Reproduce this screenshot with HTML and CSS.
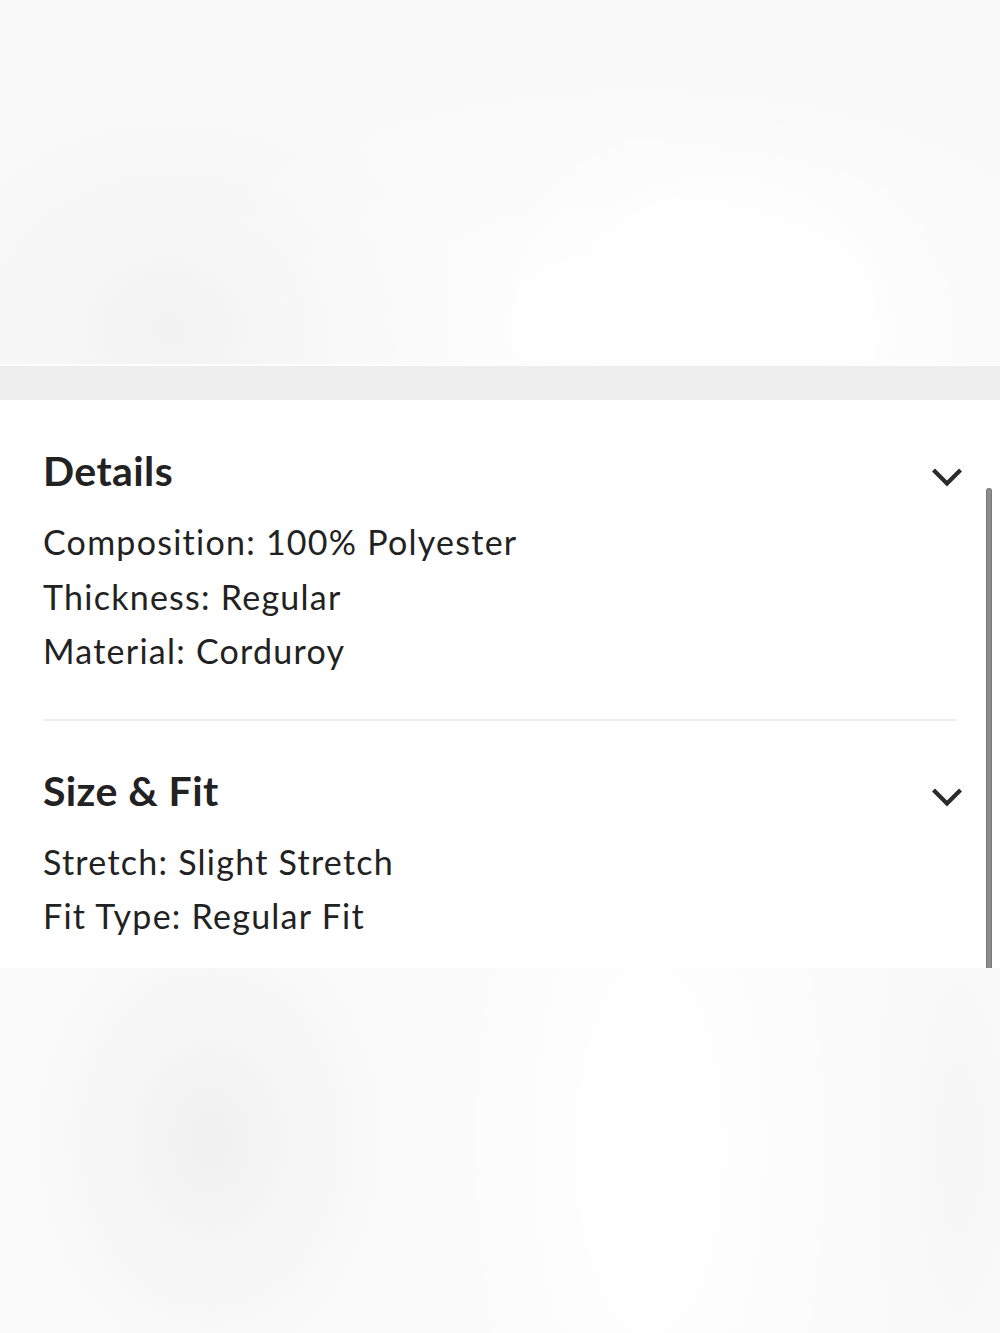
FILE: index.html
```html
<!DOCTYPE html>
<html lang="en">
<head>
<meta charset="utf-8">
<title>Product details</title>
<link rel="stylesheet" href="styles.css">
</head>
<body>
<div class="page">
  <div class="hero"></div>
  <div class="band"></div>
  <section class="panel">
    <div class="content">
      <div class="section">
        <div class="section-head">
          <h2 class="title">Details</h2>
          <svg class="chevron" width="34" height="24" viewBox="0 0 34 24" aria-hidden="true"><path d="M3.5 5 L17 18.5 L30.5 5" fill="none" stroke="#2b2b2b" stroke-width="4.2"/></svg>
        </div>
        <div class="rows">
          <p class="row">Composition: 100% Polyester</p>
          <p class="row">Thickness: Regular</p>
          <p class="row">Material: Corduroy</p>
        </div>
      </div>
      <div class="divider"></div>
      <div class="section">
        <div class="section-head">
          <h2 class="title">Size &amp; Fit</h2>
          <svg class="chevron" width="34" height="24" viewBox="0 0 34 24" aria-hidden="true"><path d="M3.5 5 L17 18.5 L30.5 5" fill="none" stroke="#2b2b2b" stroke-width="4.2"/></svg>
        </div>
        <div class="rows">
          <p class="row">Stretch: Slight Stretch</p>
          <p class="row">Fit Type: Regular Fit</p>
        </div>
      </div>
    </div>
    <div class="scrollbar"></div>
  </section>
  <div class="bottom"></div>
</div>
</body>
</html>
```
FILE: styles.css
```css
html, body {
  margin: 0;
  padding: 0;
  background: #fbfbfb;
}
body {
  font-family: Lato, "Open Sans", sans-serif;
  color: #222;
  font-variant-ligatures: none;
}
.page {
  display: flex;
  flex-direction: column;
  min-height: 1333px;
}
.hero {
  height: 364px;
  border-bottom: 2px solid #fdfdfd;
  background:
    radial-gradient(ellipse 300px 260px at 170px 330px, #f2f2f2 0%, rgba(246,246,246,0.6) 45%, rgba(249,249,249,0) 100%),
    radial-gradient(ellipse 260px 230px at 720px 330px, #ffffff 0%, rgba(255,255,255,0.7) 45%, rgba(255,255,255,0) 100%),
    radial-gradient(ellipse 520px 260px at 640px 320px, rgba(255,255,255,0.8) 0%, rgba(255,255,255,0) 100%),
    #f9f9f9;
}
.band {
  height: 34px;
  background: #eeeeee;
}
.panel {
  position: relative;
  background: #ffffff;
  height: 568px;
}
.content {
  padding: 47px 43px 0 43px;
}
.section-head {
  display: flex;
  align-items: center;
  justify-content: space-between;
  margin-right: -7px;
}
.title {
  margin: 0;
  font-size: 41px;
  line-height: 48px;
  font-weight: 700;
  letter-spacing: 0.4px;
  color: #222;
}
.chevron {
  display: block;
  margin-top: 12px;
}
.rows {
  padding-top: 20px;
}
.row {
  margin: 0;
  font-size: 34px;
  line-height: 54.5px;
  font-weight: 400;
  letter-spacing: 1.25px;
  color: #222;
}
.section:first-child .rows {
  padding-bottom: 40px;
}
.divider {
  height: 2px;
  background: #eeeeee;
  margin-bottom: 46px;
}
.scrollbar {
  position: absolute;
  right: 8px;
  top: 88px;
  bottom: 0;
  width: 6px;
  box-sizing: border-box;
  border: 1px solid #7a7a7a;
  border-bottom: none;
  background: #8c8c8c;
  border-radius: 3px 3px 0 0;
}
.bottom {
  flex: 1;
  background:
    radial-gradient(ellipse 200px 260px at 210px 172px, #f0f0f0 0%, rgba(244,244,244,0.8) 40%, rgba(250,250,250,0) 100%),
    radial-gradient(ellipse 130px 500px at 960px 180px, #f7f7f7 0%, rgba(250,250,250,0) 100%),
    radial-gradient(ellipse 200px 500px at 650px 180px, #ffffff 0%, rgba(255,255,255,0) 100%),
    #fbfbfb;
}
```
